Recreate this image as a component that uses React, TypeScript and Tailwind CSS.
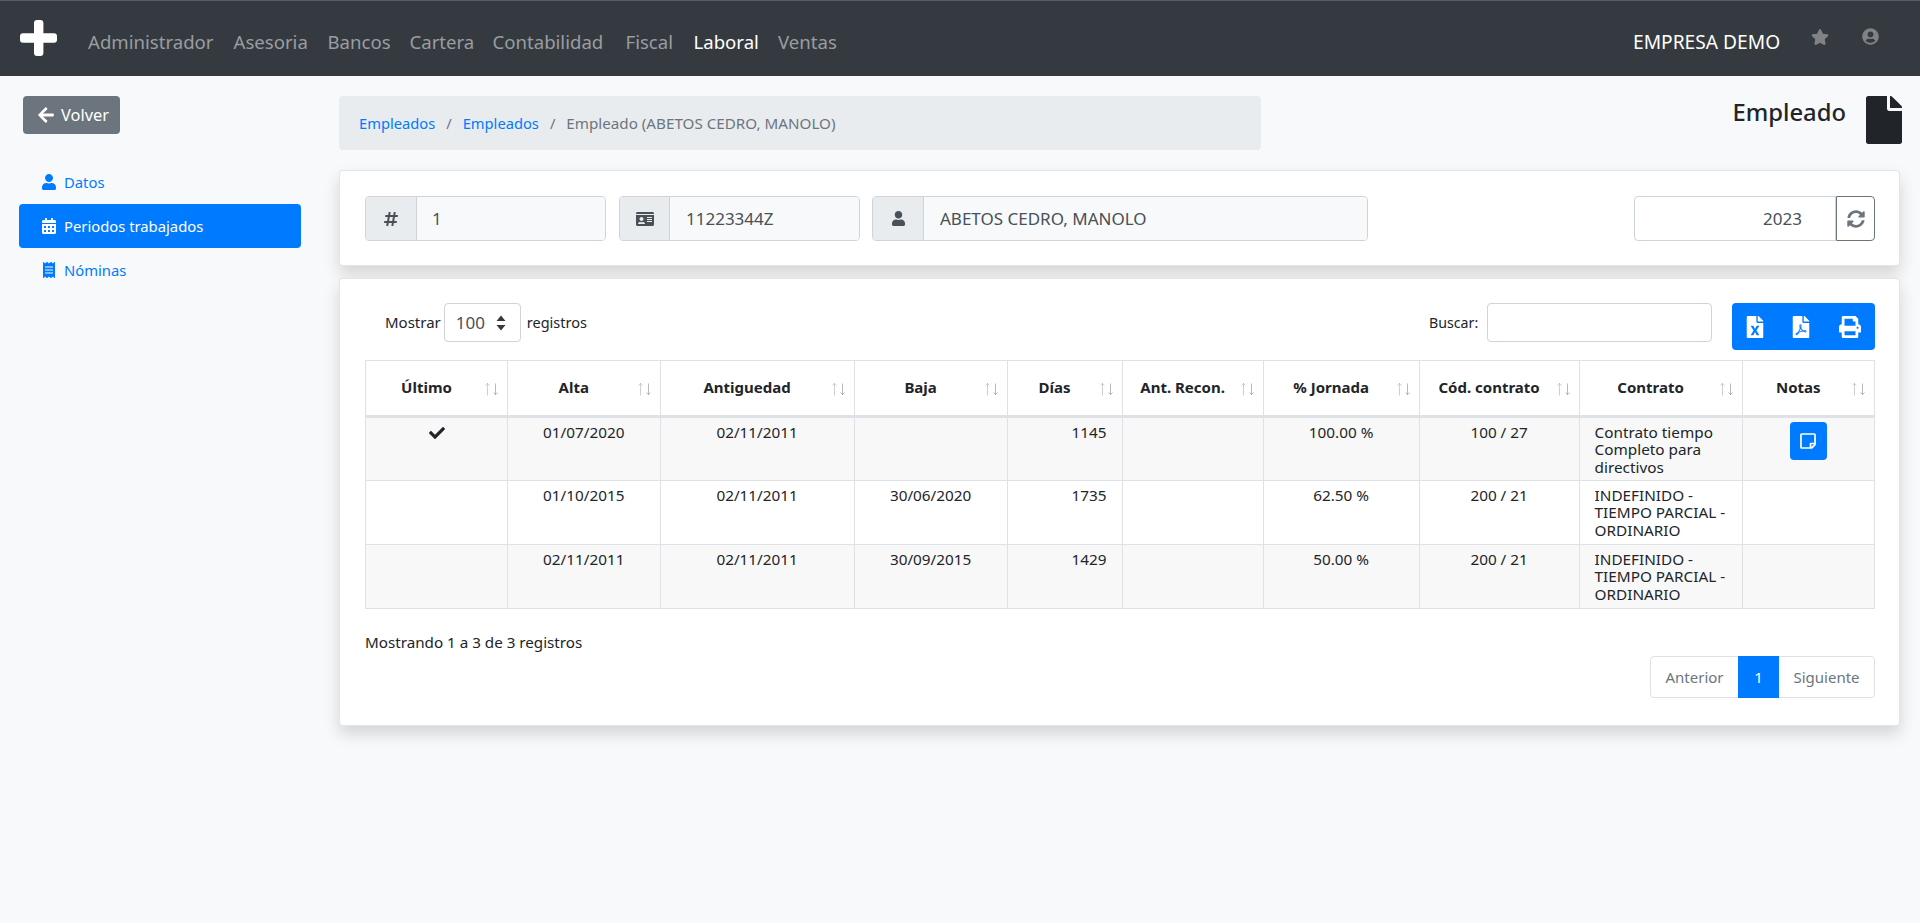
import React from "react";
import { FaArrowLeft, FaUser, FaCalendarAlt, FaReceipt, FaHashtag, FaIdCard, FaStar, FaUserCircle, FaFile, FaSyncAlt, FaFileExcel, FaFilePdf, FaPrint, FaRegStickyNote, FaCheck } from "react-icons/fa";

const navItems: [string, string][] = [
  ["Administrador", "w-[125.5px]"],
  ["Asesoria", "w-[74px]"],
  ["Bancos", "w-[62px]"],
  ["Cartera", "w-[63px]"],
  ["Contabilidad", "w-[113px]"],
  ["Fiscal", "w-[48px]"],
];

function Sort() {
  return (
    <svg className="absolute right-[9px] top-[22px]" width="13" height="13" viewBox="0 0 13 13" fill="none" stroke="#212529" strokeWidth="1">
      <path d="M2.5 0.5V12.5M0.5 2.5L2.5 0.5L4.5 2.5" opacity="0.22" />
      <path d="M10.5 0.5V11.5M8.5 9.5L10.5 11.5L12.5 9.5" opacity="0.32" />
    </svg>
  );
}

const heads: [string, string][] = [
  ["Último", "w-[142px]"],
  ["Alta", "w-[152.6px]"],
  ["Antiguedad", "w-[194px]"],
  ["Baja", "w-[153px]"],
  ["Días", "w-[115px]"],
  ["Ant. Recon.", "w-[141px]"],
  ["% Jornada", "w-[156px]"],
  ["Cód. contrato", "w-[160px]"],
  ["Contrato", "w-[163px]"],
  ["Notas", "w-[132.4px]"],
];

const rows = [
  { check: true, alta: "01/07/2020", ant: "02/11/2011", baja: "", dias: "1145", jor: "100.00 %", cod: "100 / 27", con: ["Contrato tiempo", "Completo para", "directivos"], nota: true, bg: "bg-[#f8f8f8]" },
  { check: false, alta: "01/10/2015", ant: "02/11/2011", baja: "30/06/2020", dias: "1735", jor: "62.50 %", cod: "200 / 21", con: ["INDEFINIDO -", "TIEMPO PARCIAL -", "ORDINARIO"], nota: false, bg: "bg-white" },
  { check: false, alta: "02/11/2011", ant: "02/11/2011", baja: "30/09/2015", dias: "1429", jor: "50.00 %", cod: "200 / 21", con: ["INDEFINIDO -", "TIEMPO PARCIAL -", "ORDINARIO"], nota: false, bg: "bg-[#f8f8f8]" },
];

const td = "border border-[#dee2e6] align-top pt-[6px] text-center";

export default function App() {
  return (
    <div className="min-h-screen bg-[#f8f9fa] text-[#212529] font-['Noto_Sans',sans-serif] text-[15px]">
      <nav className="h-[76px] bg-[#343a40] border-t border-[#5a5e63] flex items-start relative">
        <svg className="absolute left-[20px] top-[19px]" width="37" height="36" viewBox="0 0 37 36">
          <rect x="14" y="0" width="9.4" height="36" rx="3" fill="#fff" />
          <rect x="0" y="13.3" width="37" height="9.4" rx="3" fill="#fff" />
        </svg>
        <div className="ml-[88px] mt-[28px] flex gap-5 text-[18.6px] leading-[26px] text-[#9a9da0] whitespace-nowrap">
          {navItems.map(([t, w]) => (
            <span key={t} className={w}>{t}</span>
          ))}
          <span className="w-[64.5px] text-white">Laboral</span>
          <span className="w-[57px]">Ventas</span>
        </div>
        <span className="absolute left-[1633px] top-[28px] text-[19.2px] leading-[26px] text-white whitespace-nowrap">EMPRESA DEMO</span>
        <FaStar className="absolute left-[1811px] top-[27px] text-[#808285]" size={18} />
        <FaUserCircle className="absolute left-[1862px] top-[27px] text-[#808285]" size={17} />
      </nav>

      <div className="flex">
        <aside className="w-[339px] shrink-0 pt-[20px] pl-[19px]">
          <button className="ml-[4px] w-[97px] h-[38px] bg-[#6c757d] text-white rounded flex items-center pl-[14px] gap-[6px] text-[16.4px]">
            <FaArrowLeft size={18} />
            <span>Volver</span>
          </button>
          <ul className="mt-[26px] w-[282px] text-[14.8px] text-[#007bff]">
            <li className="h-[44px] flex items-center pl-[22px] gap-[7px]"><FaUser size={16} />Datos</li>
            <li className="h-[44px] flex items-center pl-[22px] gap-[7px] bg-[#007bff] text-white rounded"><FaCalendarAlt size={16} />Periodos trabajados</li>
            <li className="h-[44px] flex items-center pl-[22px] gap-[7px]"><FaReceipt size={16} />Nóminas</li>
          </ul>
        </aside>

        <main className="w-[1561px] pt-[20px]">
          <div className="flex items-start justify-between h-[74px]">
            <div className="w-[922px] h-[54px] bg-[#e9ecef] rounded flex items-center pl-[20px] text-[14.7px] text-[#6c757d] whitespace-nowrap">
              <span className="text-[#007bff]">Empleados</span>
              <span className="mx-[11px]">/</span>
              <span className="text-[#007bff]">Empleados</span>
              <span className="mx-[11px]">/</span>
              <span className="text-[15.2px]">Empleado (ABETOS CEDRO, MANOLO)</span>
            </div>
            <div className="flex items-start">
              <span className="text-[23.8px] leading-[32px] font-medium mr-[14px]">Empleado</span>
              <FaFile className="mr-[-8px]" size={48} />
            </div>
          </div>

          <section className="w-[1561px] h-[96px] bg-white border border-black/10 rounded shadow-[0_8px_16px_rgba(0,0,0,0.15)] flex items-start pt-[25px] pl-[25px] relative">
            <div className="flex h-[45px] w-[241px] border border-[#ced4da] rounded overflow-hidden text-[#495057]">
              <span className="w-[51px] bg-[#e9ecef] border-r border-[#ced4da] flex items-center justify-center"><FaHashtag size={16} /></span>
              <span className="flex-1 bg-[#f8f9fa] flex items-center pl-[15px] text-[17px]">1</span>
            </div>
            <div className="ml-[13px] flex h-[45px] w-[241px] border border-[#ced4da] rounded overflow-hidden text-[#495057]">
              <span className="w-[50px] bg-[#e9ecef] border-r border-[#ced4da] flex items-center justify-center"><FaIdCard size={18} /></span>
              <span className="flex-1 bg-[#f8f9fa] flex items-center pl-[16px] text-[17px]">11223344Z</span>
            </div>
            <div className="ml-[12px] flex h-[45px] w-[496px] border border-[#ced4da] rounded overflow-hidden text-[#495057]">
              <span className="w-[51px] bg-[#e9ecef] border-r border-[#ced4da] flex items-center justify-center"><FaUser size={15} /></span>
              <span className="flex-1 bg-[#f8f9fa] flex items-center pl-[16px] text-[17px]">ABETOS CEDRO, MANOLO</span>
            </div>
            <div className="absolute left-[1294px] top-[25px] flex h-[45px] w-[241px] text-[#495057]">
              <span className="w-[202px] bg-white border border-[#ced4da] rounded-l flex items-center justify-end pr-[33px] text-[17px]">2023</span>
              <span className="w-[39px] border border-[#6c757d] rounded-r flex items-center justify-center text-[#6c757d]"><FaSyncAlt size={18} /></span>
            </div>
          </section>

          <section className="mt-[12px] w-[1561px] h-[448px] bg-white border border-black/10 rounded shadow-[0_8px_16px_rgba(0,0,0,0.15)] relative">
            <div className="absolute left-[45px] top-[24px] flex items-center gap-[3px] text-[15px] whitespace-nowrap">
              <span>Mostrar</span>
              <span className="w-[77px] h-[39px] border border-[#ced4da] rounded flex items-center justify-between pl-[11px] pr-[14px] text-[17px] text-[#495057]">
                100
                <svg width="10" height="16" viewBox="0 0 10 16"><path d="M5 0.5 L9.5 6 H0.5 Z M5 15.5 L9.5 10 H0.5 Z" fill="#343a40" /></svg>
              </span>
              <span className="ml-[3px] text-[14.5px]">registros</span>
            </div>
            <div className="absolute left-[1089px] top-[24px] flex items-center gap-[9px] text-[14.2px]">
              <span>Buscar:</span>
              <span className="w-[225px] h-[39px] border border-[#ced4da] rounded bg-white block" />
            </div>
            <div className="absolute left-[1392px] top-[24px] w-[143px] h-[47px] bg-[#007bff] rounded text-white">
              <FaFileExcel className="absolute left-[12px] top-[13px]" size={22} />
              <FaFilePdf className="absolute left-[58px] top-[13px]" size={22} />
              <FaPrint className="absolute left-[107px] top-[13px]" size={22} />
            </div>

            <table className="absolute left-[25px] top-[81px] w-[1509px] table-fixed border-collapse text-[15.3px] leading-[17.3px]">
              <thead>
                <tr className="h-[56px]">
                  {heads.map(([t, w]) => (
                    <th key={t} className={`${w} relative border border-[#dee2e6] border-b-[3px] font-bold text-[15px] text-center pl-[12px] pr-[32px] whitespace-nowrap`}>
                      {t}
                      <Sort />
                    </th>
                  ))}
                </tr>
              </thead>
              <tbody>
                {rows.map((r, i) => (
                  <tr key={i} className={`h-[64px] ${r.bg}`}>
                    <td className={td}>{r.check && <FaCheck className="mx-auto mt-[1px]" size={16} />}</td>
                    <td className={td}>{r.alta}</td>
                    <td className={td}>{r.ant}</td>
                    <td className={td}>{r.baja}</td>
                    <td className="border border-[#dee2e6] align-top pt-[6px] text-right pr-[15px]">{r.dias}</td>
                    <td className={td}></td>
                    <td className={td}>{r.jor}</td>
                    <td className={td}>{r.cod}</td>
                    <td className="border border-[#dee2e6] align-top pt-[6px] pl-[15px] whitespace-nowrap">
                      {r.con.map((l) => (<div key={l}>{l}</div>))}
                    </td>
                    <td className="border border-[#dee2e6] align-top pt-[4px]">
                      {r.nota && (
                        <span className="mx-auto w-[37px] h-[38px] bg-[#007bff] rounded flex items-center justify-center text-white"><FaRegStickyNote size={18} /></span>
                      )}
                    </td>
                  </tr>
                ))}
              </tbody>
            </table>

            <span className="absolute left-[25px] top-[353px] text-[15.2px] leading-[20px]">Mostrando 1 a 3 de 3 registros</span>

            <div className="absolute left-[1310px] top-[377px] w-[225px] h-[42px] flex border border-[#dee2e6] rounded text-[15px] text-[#6c757d]">
              <span className="w-[87px] flex items-center justify-center">Anterior</span>
              <span className="w-[41px] -my-px bg-[#007bff] text-white flex items-center justify-center">1</span>
              <span className="flex-1 flex items-center justify-center">Siguiente</span>
            </div>
          </section>
        </main>
      </div>
    </div>
  );
}
